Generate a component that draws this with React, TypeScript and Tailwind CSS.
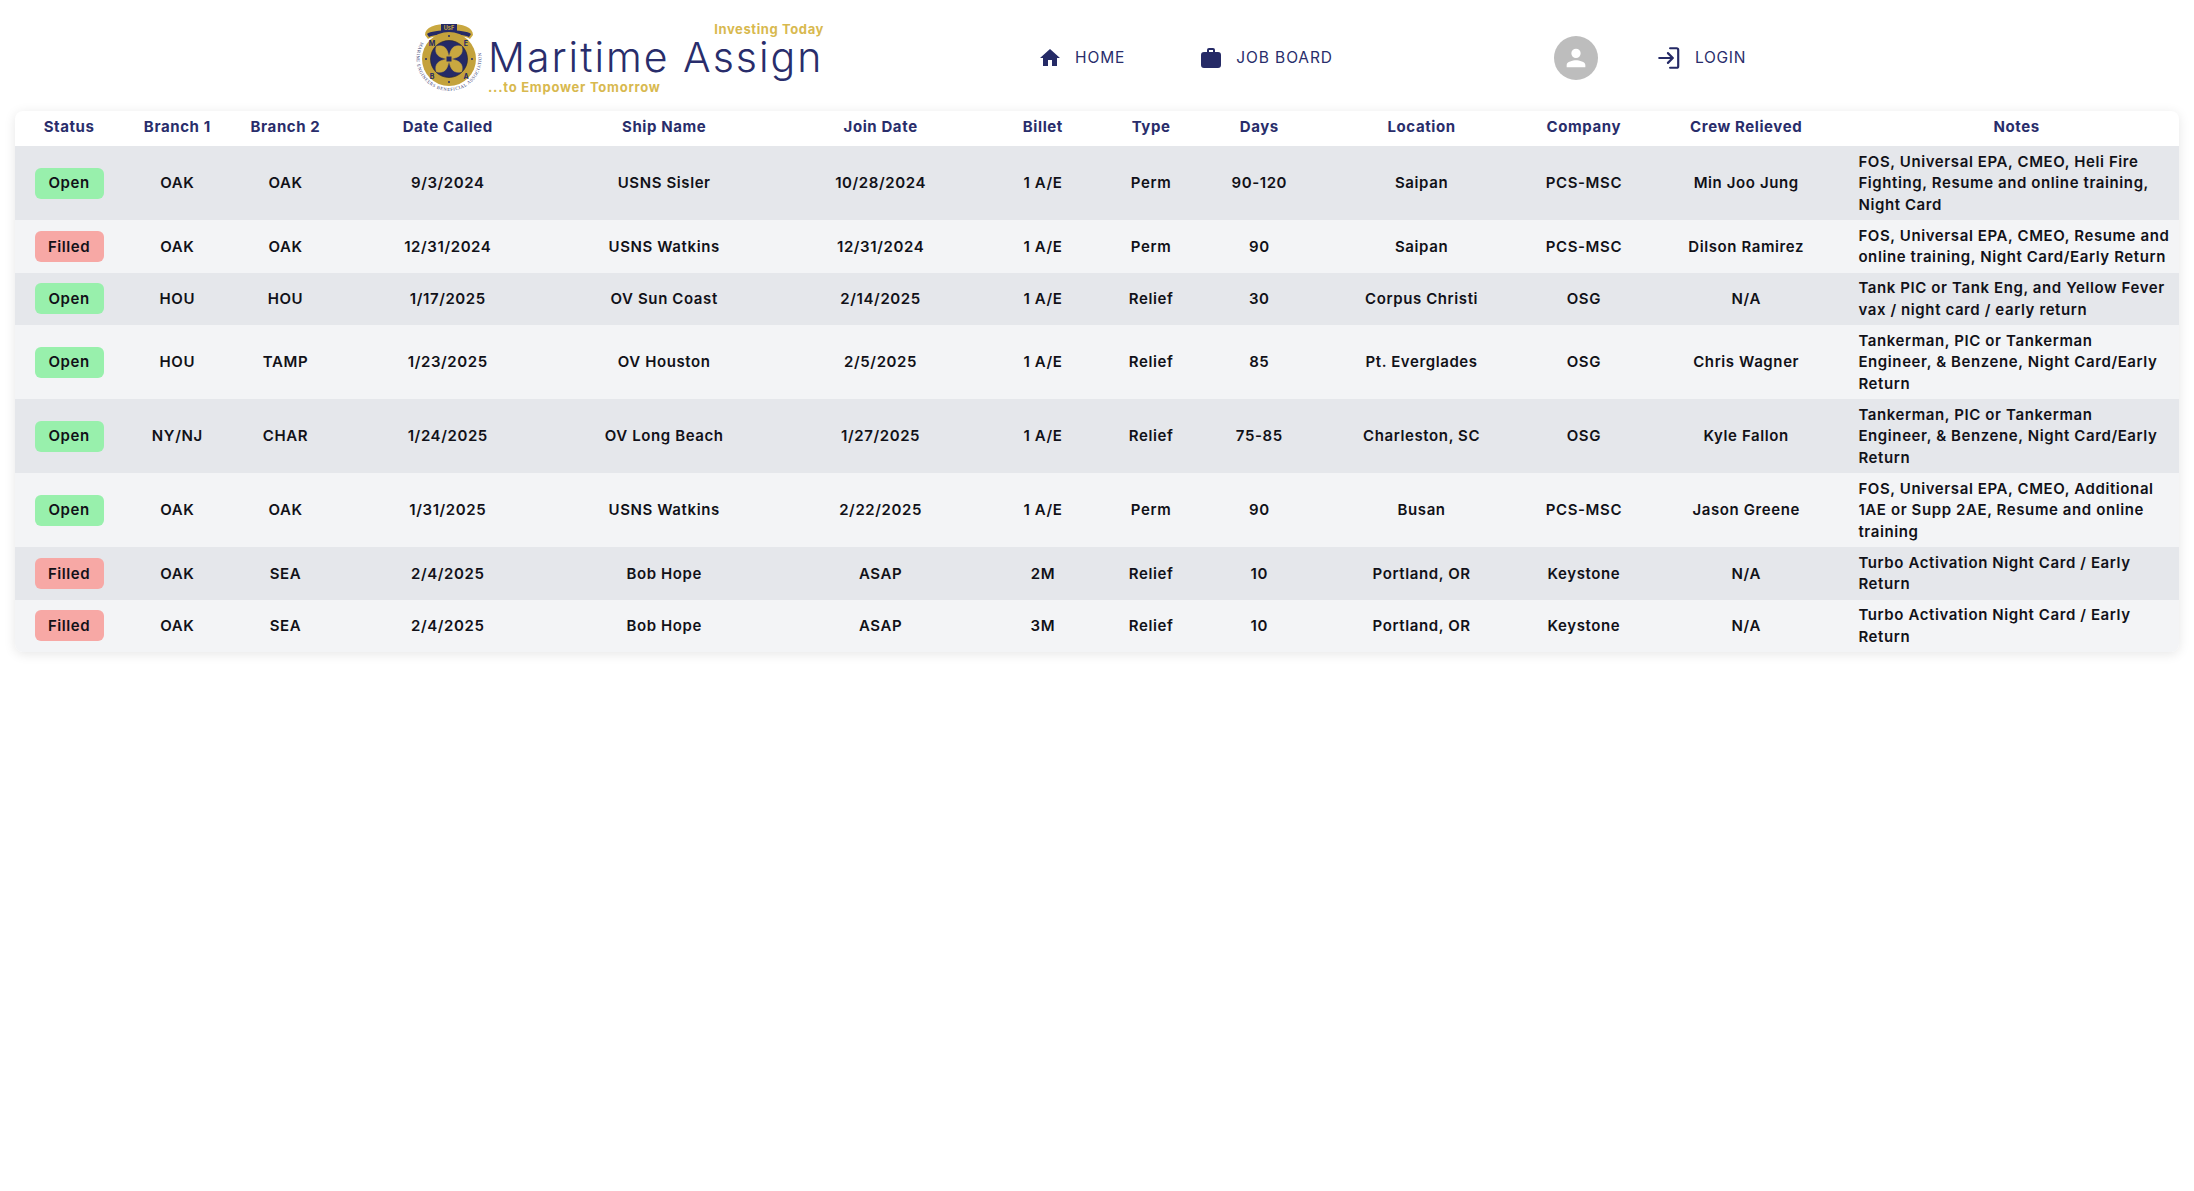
const FONT = "font-['Inter','Liberation_Sans',sans-serif]";

const rows = [
  { status: "Open", branch1: "OAK", branch2: "OAK", called: "9/3/2024", ship: "USNS Sisler", join: "10/28/2024", billet: "1 A/E", type: "Perm", days: "90-120", location: "Saipan", company: "PCS-MSC", crew: "Min Joo Jung", notes: "FOS, Universal EPA, CMEO, Heli Fire Fighting, Resume and online training, Night Card" },
  { status: "Filled", branch1: "OAK", branch2: "OAK", called: "12/31/2024", ship: "USNS Watkins", join: "12/31/2024", billet: "1 A/E", type: "Perm", days: "90", location: "Saipan", company: "PCS-MSC", crew: "Dilson Ramirez", notes: "FOS, Universal EPA, CMEO, Resume and online training, Night Card/Early Return" },
  { status: "Open", branch1: "HOU", branch2: "HOU", called: "1/17/2025", ship: "OV Sun Coast", join: "2/14/2025", billet: "1 A/E", type: "Relief", days: "30", location: "Corpus Christi", company: "OSG", crew: "N/A", notes: "Tank PIC or Tank Eng, and Yellow Fever vax / night card / early return" },
  { status: "Open", branch1: "HOU", branch2: "TAMP", called: "1/23/2025", ship: "OV Houston", join: "2/5/2025", billet: "1 A/E", type: "Relief", days: "85", location: "Pt. Everglades", company: "OSG", crew: "Chris Wagner", notes: "Tankerman, PIC or Tankerman\nEngineer, & Benzene, Night Card/Early Return" },
  { status: "Open", branch1: "NY/NJ", branch2: "CHAR", called: "1/24/2025", ship: "OV Long Beach", join: "1/27/2025", billet: "1 A/E", type: "Relief", days: "75-85", location: "Charleston, SC", company: "OSG", crew: "Kyle Fallon", notes: "Tankerman, PIC or Tankerman\nEngineer, & Benzene, Night Card/Early Return" },
  { status: "Open", branch1: "OAK", branch2: "OAK", called: "1/31/2025", ship: "USNS Watkins", join: "2/22/2025", billet: "1 A/E", type: "Perm", days: "90", location: "Busan", company: "PCS-MSC", crew: "Jason Greene", notes: "FOS, Universal EPA, CMEO, Additional 1AE or Supp 2AE, Resume and online training" },
  { status: "Filled", branch1: "OAK", branch2: "SEA", called: "2/4/2025", ship: "Bob Hope", join: "ASAP", billet: "2M", type: "Relief", days: "10", location: "Portland, OR", company: "Keystone", crew: "N/A", notes: "Turbo Activation Night Card / Early Return" },
  { status: "Filled", branch1: "OAK", branch2: "SEA", called: "2/4/2025", ship: "Bob Hope", join: "ASAP", billet: "3M", type: "Relief", days: "10", location: "Portland, OR", company: "Keystone", crew: "N/A", notes: "Turbo Activation Night Card / Early Return" },
];

const headers = ["Status", "Branch 1", "Branch 2", "Date Called", "Ship Name", "Join Date", "Billet", "Type", "Days", "Location", "Company", "Crew Relieved", "Notes"];

const GRID = "grid grid-cols-[1fr_1fr_1fr_2fr_2fr_2fr_1fr_1fr_1fr_2fr_1fr_2fr_3fr]";

function Logo() {
  return (
    <svg width="68" height="74" viewBox="0 0 68 74" className="shrink-0">
      <defs>
        <path id="ringText" d="M 6 21 A 32.5 32.5 0 1 0 62 21" fill="none" />
      </defs>
      <path d="M10 14 C 10 6, 20 3, 34 3 C 48 3, 58 6, 58 14 L 55 18 C 47 13, 21 13, 13 18 Z" fill="#c9a840" />
      <path d="M12 13 C 18 8, 50 8, 56 13 L 54 16 C 46 12, 22 12, 14 16 Z" fill="#252a66" />
      <rect x="26" y="3" width="16" height="7" fill="#252a66" />
      <text x="34" y="9" textAnchor="middle" fontSize="5.5" fontWeight="700" fill="#c9a840">UsF</text>
      <circle cx="34" cy="38" r="27" fill="#c4a23c" />
      <circle cx="34" cy="38" r="18.500" fill="#252a66" stroke="#1a1a2e" strokeWidth="0.6" />
      <g fill="#c9a840" stroke="#c9a840" strokeWidth="0.5">
        <path d="M34 38 C 27 30, 27 24, 34 20 C 41 24, 41 30, 34 38 Z" transform="rotate(45 34 38)" />
        <path d="M34 38 C 27 30, 27 24, 34 20 C 41 24, 41 30, 34 38 Z" transform="rotate(135 34 38)" />
        <path d="M34 38 C 27 30, 27 24, 34 20 C 41 24, 41 30, 34 38 Z" transform="rotate(225 34 38)" />
        <path d="M34 38 C 27 30, 27 24, 34 20 C 41 24, 41 30, 34 38 Z" transform="rotate(315 34 38)" />
      </g>
      <rect x="31" y="35" width="6" height="6" fill="#252a66" stroke="#c9a840" strokeWidth="1" />
      <g fill="#252a66">
        <circle cx="34" cy="15" r="1" />
        <circle cx="57" cy="38" r="1" />
        <circle cx="34" cy="61" r="1" />
        <circle cx="11" cy="38" r="1" />
      </g>
      <g fontSize="7" fontWeight="700" fill="#252a66" textAnchor="middle">
        <text x="17" y="24.500">M</text>
        <text x="51" y="24.500">E</text>
        <text x="17" y="57.500">B</text>
        <text x="51" y="57.500">A</text>
      </g>
      <text fontSize="4.6" fill="#30346e" fontFamily="Liberation Serif, serif" letterSpacing="0.55">
        <textPath href="#ringText">MARINE ENGINEERS BENEFICIAL ASSOCIATION</textPath>
      </text>
    </svg>
  );
}

function Header() {
  return (
    <header className={`flex h-[111px] items-center pl-[415px] pt-[5px] text-[#292d6b] ${FONT}`}>
      <Logo />
      <div className="ml-[5px] flex w-[336px] flex-col">
        <span className="self-end text-[13px] font-bold leading-4 tracking-[0.6px] text-[#d8b94f]">Investing Today</span>
        <span className="-mt-[2px] text-[41px] font-light leading-[44px] tracking-[2px] whitespace-nowrap">Maritime Assign</span>
        <span className="text-[13px] font-bold leading-4 tracking-[0.75px] text-[#d8b94f]">...to Empower Tomorrow</span>
      </div>
      <nav className="ml-[214px] flex items-center text-[15.5px] leading-5 tracking-[0.9px]">
        <a className="flex items-center gap-[13px]">
          <svg width="24" height="24" viewBox="0 0 24 24" fill="#252a66"><path d="M10 20v-6h4v6h5v-8h3L12 3 2 12h3v8z" /></svg>
          HOME
        </a>
        <a className="ml-[74px] flex items-center gap-[13px]">
          <svg width="24" height="24" viewBox="0 0 24 24" fill="#252a66"><path d="M8 6V4a2 2 0 0 1 2-2h4a2 2 0 0 1 2 2v2h3a3 3 0 0 1 3 3v10a3 3 0 0 1-3 3H5a3 3 0 0 1-3-3V9a3 3 0 0 1 3-3zm2 0h4V4h-4z" /></svg>
          JOB BOARD
        </a>
      </nav>
      <div className="ml-[221px] flex h-11 w-11 items-center justify-center rounded-full bg-[#bdbdbd]">
        <svg width="28" height="28" viewBox="0 0 24 24" fill="#fff"><path d="M12 12a4 4 0 1 0 0-8 4 4 0 0 0 0 8m0 2c-2.7 0-8 1.3-8 4v2h16v-2c0-2.7-5.300-4-8-4" /></svg>
      </div>
      <a className="ml-[58px] flex items-center gap-[13px] text-[15.5px] leading-5 tracking-[0.7px]">
        <svg width="26" height="26" viewBox="0 0 24 24" fill="none" stroke="#252a66" strokeWidth="2" strokeLinecap="round" strokeLinejoin="round">
          <path d="M13 3h6a1.5 1.5 0 0 1 1.500 1.500v15A1.500 1.500 0 0 1 19 21h-6" />
          <path d="M11 16.500l4.500-4.500L11 7.500" />
          <path d="M15 12H3" />
        </svg>
        LOGIN
      </a>
    </header>
  );
}

function StatusBadge({ status }: { status: string }) {
  return (
    <span className={`flex h-[31px] w-[69px] items-center justify-center rounded-[6px] ${status === "Open" ? "bg-[#98f0ac]" : "bg-[#f7a8a5]"}`}>
      {status}
    </span>
  );
}

export default function App() {
  return (
    <div className={`min-h-screen bg-white ${FONT}`}>
      <Header />
      <div className="mx-[15px] overflow-hidden rounded-[8px] bg-white shadow-[0_2px_12px_rgba(0,0,0,0.1)]">
        <div className={`${GRID} h-[35px] items-center pb-[3px] text-center text-[15px] font-bold tracking-[0.6px] text-[#292d6b]`}>
          {headers.map((h) => (
            <div key={h}>{h}</div>
          ))}
        </div>
        {rows.map((r, i) => (
          <div
            key={i}
            className={`${GRID} items-center text-center text-[15px] font-semibold leading-[21.5px] tracking-[0.6px] text-[#111118] ${i % 2 === 0 ? "bg-[#e5e7eb]" : "bg-[#f3f4f6]"}`}
          >
            <div className="flex justify-center"><StatusBadge status={r.status} /></div>
            <div>{r.branch1}</div>
            <div>{r.branch2}</div>
            <div>{r.called}</div>
            <div>{r.ship}</div>
            <div>{r.join}</div>
            <div>{r.billet}</div>
            <div>{r.type}</div>
            <div>{r.days}</div>
            <div>{r.location}</div>
            <div>{r.company}</div>
            <div>{r.crew}</div>
            <div className="py-[4.75px] pl-[4px] pr-[5px] text-left whitespace-pre-line">{r.notes}</div>
          </div>
        ))}
      </div>
    </div>
  );
}
